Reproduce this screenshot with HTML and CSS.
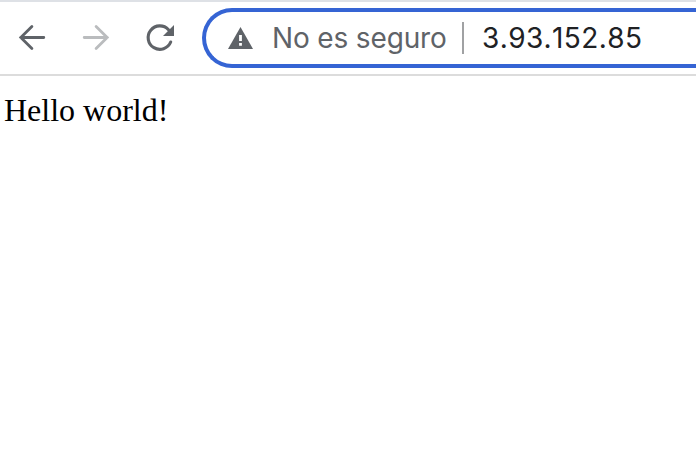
FILE: index.html
```html
<!DOCTYPE html>
<html lang="es">
<head>
<meta charset="utf-8">
<title>3.93.152.85</title>
<link rel="stylesheet" href="styles.css">
</head>
<body>
<header class="toolbar">
  <nav class="nav">
    <svg class="icon" viewBox="0 0 32 32"><path d="M27.800 15.500H4.800M15.900 4.400L4.800 15.500L15.900 26.600"/></svg>
    <svg class="icon disabled" viewBox="0 0 32 32"><path d="M4.200 15.500H27.200M16.100 4.400L27.200 15.500L16.100 26.600"/></svg>
    <svg class="icon reload" viewBox="0 0 32 32"><path d="M24.500 7.700A11.700 11.700 0 1 0 26.700 20"/><path class="solid" d="M30 3V14H19Z"/></svg>
  </nav>
  <div class="address">
    <svg class="warning" viewBox="0 0 25 22"><path d="M12.500 0L25 22H0Z"/><path class="mark" d="M11.100 8h2.800v6h-2.800zM11.100 16h2.800v2.700h-2.800z"/></svg>
    <span class="status">No es seguro</span>
    <span class="divider"></span>
    <span class="url">3.93.152.85</span>
  </div>
</header>
<main class="content">Hello world!</main>
</body>
</html>
```
FILE: styles.css
```css
* { box-sizing: border-box; }
body { margin: 0; background: #fff; }
.toolbar { display: flex; align-items: center; height: 76px; border-top: 2px solid #dee1e6; border-bottom: 2px solid #dcdcdc; }
.nav { display: flex; gap: 32px; padding-left: 16px; width: 202px; flex: none; }
.icon { width: 32px; height: 32px; fill: none; stroke: #5f6368; stroke-width: 2.8; stroke-linecap: round; }
.icon.disabled { stroke: #babcbe; }
.icon.reload { stroke-width: 3.1; }
.icon .solid { fill: #5f6368; stroke: none; }
.address { display: flex; align-items: center; flex: 1; min-width: 0; height: 60px; padding-left: 22px; border: 4px solid #3564d4; border-right: 0; border-radius: 30px 0 0 30px; font: 28px/36px Inter, sans-serif; white-space: nowrap; }
.warning { flex: none; width: 25px; height: 22px; fill: #5f6368; }
.mark { fill: #fff; }
.status { width: 174px; margin-left: 19px; color: #5f6368; letter-spacing: -0.15px; }
.divider { width: 2px; height: 32px; margin: 0 18px 0 16px; background: #a0a1a3; }
.url { color: #202124; font-kerning: none; letter-spacing: 0.4px; }
.content { padding: 16px 4px; font: 32px/37px "Liberation Serif", serif; color: #000; }
```
